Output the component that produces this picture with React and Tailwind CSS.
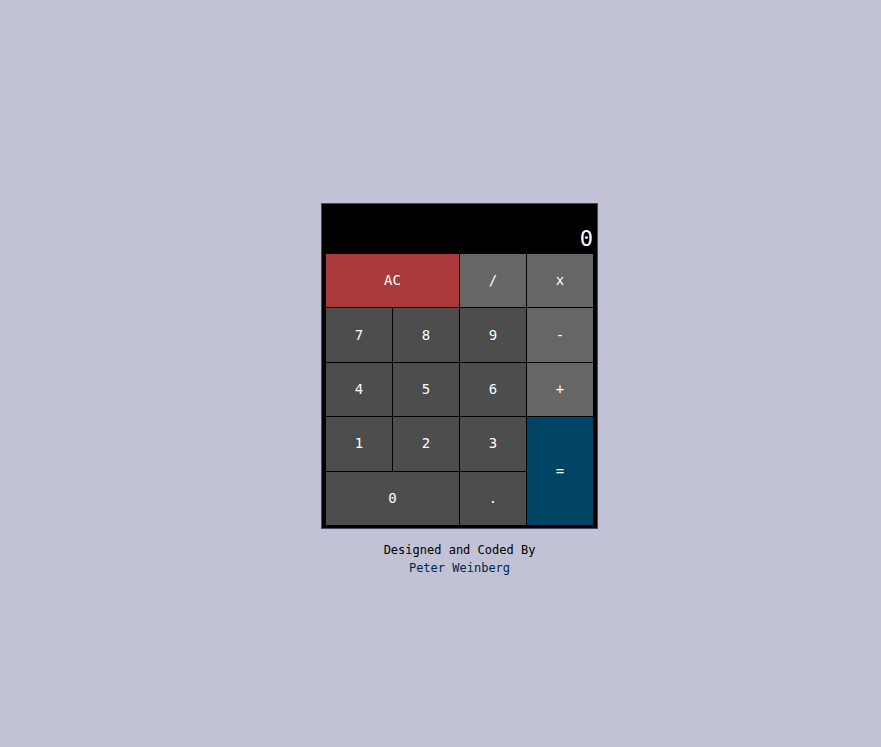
export default function App() {
  const num = 'bg-[#4d4d4d] text-white';
  const op = 'bg-[#666666] text-white';
  return (
    <div
      className="min-h-screen w-full bg-[#c2c2d6] pt-[203px] pl-[321px]"
      style={{ fontFamily: '"DejaVu Sans Mono", "Liberation Mono", monospace' }}
    >
      <div className="w-[277px]">
        <div className="border border-[#47476b] bg-black px-[4px] pb-[3px]">
          <div className="h-[50px] flex flex-col justify-end items-end">
            <div className="h-[20px] text-[20px] leading-[20px] text-orange-400"></div>
            <div className="text-[22px] leading-[26px] text-white pb-[2px]">0</div>
          </div>
          <div className="grid grid-cols-4 auto-rows-[53.4px] gap-px bg-black w-[267px] text-[14px]">
            <button className="col-span-2 bg-[#ac3939] text-white">AC</button>
            <button className={op}>/</button>
            <button className={op}>x</button>
            <button className={num}>7</button>
            <button className={num}>8</button>
            <button className={num}>9</button>
            <button className={op}>-</button>
            <button className={num}>4</button>
            <button className={num}>5</button>
            <button className={num}>6</button>
            <button className={op}>+</button>
            <button className={num}>1</button>
            <button className={num}>2</button>
            <button className={num}>3</button>
            <button className="row-span-2 bg-[#004466] text-white">=</button>
            <button className={`col-span-2 ${num}`}>0</button>
            <button className={num}>.</button>
          </div>
        </div>
        <div className="mt-[12px] text-center text-[12px] leading-[18px]">
          <div className="text-black">Designed and Coded By</div>
          <div className="text-[#00264d]">Peter Weinberg</div>
        </div>
      </div>
    </div>
  );
}
